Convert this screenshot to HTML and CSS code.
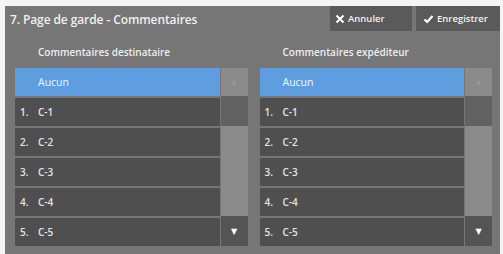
FILE: index.html
```html
<!DOCTYPE html>
<html lang="fr">
<head>
  <meta charset="UTF-8">
  <title>Page de garde - Commentaires</title>
  <link rel="stylesheet" href="styles.css">
</head>
<body>

<div class="panel">
  <header class="top">
    <h1>7. Page de garde - Commentaires</h1>
    <div class="actions">
      <button class="btn">
        <svg width="10" height="10" viewBox="0 0 10 10"><path d="M1.5 1.5 L8.5 8.5 M8.5 1.5 L1.5 8.5" stroke="#fff" stroke-width="2" fill="none"/></svg>
        Annuler
      </button>
      <button class="btn">
        <svg width="11" height="10" viewBox="0 0 11 10"><path d="M1.5 5.5 L4.2 8 L9.5 2" stroke="#fff" stroke-width="2.2" fill="none"/></svg>
        Enregistrer
      </button>
    </div>
  </header>

  <div class="cols">
    <section class="col">
      <h2>Commentaires destinataire</h2>
      <div class="box">
        <ul class="list">
          <li class="sel">Aucun</li>
          <li><span class="num">1.</span>C-1</li>
          <li><span class="num">2.</span>C-2</li>
          <li><span class="num">3.</span>C-3</li>
          <li><span class="num">4.</span>C-4</li>
          <li><span class="num">5.</span>C-5</li>
        </ul>
        <div class="scroll">
          <div class="up">&#9650;</div>
          <div class="thumb"></div>
          <div class="track"></div>
          <div class="down">&#9660;</div>
        </div>
      </div>
    </section>

    <section class="col">
      <h2>Commentaires expéditeur</h2>
      <div class="box">
        <ul class="list">
          <li class="sel">Aucun</li>
          <li><span class="num">1.</span>C-1</li>
          <li><span class="num">2.</span>C-2</li>
          <li><span class="num">3.</span>C-3</li>
          <li><span class="num">4.</span>C-4</li>
          <li><span class="num">5.</span>C-5</li>
        </ul>
        <div class="scroll">
          <div class="up">&#9650;</div>
          <div class="thumb"></div>
          <div class="track"></div>
          <div class="down">&#9660;</div>
        </div>
      </div>
    </section>
  </div>
</div>

</body>
</html>
```

FILE: styles.css
```css
body {
  margin: 0;
  background: #f4f4f4;
  font-family: "Open Sans", "DejaVu Sans", sans-serif;
  color: #eee;
}
.panel {
  margin: 6px 3px 0 5px;
  height: 248px;
  background: #767676;
}
.top {
  display: flex;
  justify-content: space-between;
  height: 25px;
}
h1 {
  margin: 0;
  padding-left: 5px;
  font-size: 12px;
  font-weight: 600;
  line-height: 27px;
  letter-spacing: -0.1px;
  color: #f0f0f0;
}
.actions {
  display: flex;
  gap: 4px;
}
.btn {
  display: flex;
  align-items: center;
  gap: 3px;
  height: 25px;
  padding: 0 0 0 5px;
  border: none;
  background: #5a5a5a;
  color: #f2f2f2;
  font-family: inherit;
  font-size: 9.5px;
  font-weight: 600;
}
.btn:first-child {
  width: 82px;
}
.btn:last-child {
  width: 84px;
  padding-left: 7px;
}
.cols {
  display: flex;
  gap: 12px;
  padding: 0 8px 0 10px;
}
.col {
  flex: 1;
}
h2 {
  margin: 0;
  padding-left: 23px;
  height: 37px;
  line-height: 42px;
  font-size: 10px;
  font-weight: 600;
  color: #eee;
}
.box {
  display: flex;
  gap: 1px;
}
.list {
  flex: 1;
  margin: 0;
  padding: 0;
  list-style: none;
  display: flex;
  flex-direction: column;
  gap: 2px;
}
.list li {
  height: 28px;
  line-height: 28px;
  padding-left: 5px;
  background: #4f4f4f;
  font-size: 10px;
  font-weight: 600;
  color: #e4e4e4;
}
.list li.sel {
  background: #5d9de0;
  padding-left: 23px;
  color: #eef6ff;
  font-weight: 400;
  font-size: 10.5px;
}
.num {
  display: inline-block;
  width: 18px;
}
.scroll {
  width: 27px;
  display: flex;
  flex-direction: column;
}
.up {
  height: 28px;
  background: #8b8b8b;
  color: #9a9a9a;
  font-size: 6px;
  text-align: center;
  line-height: 28px;
}
.thumb {
  height: 30px;
  background: #626262;
}
.track {
  flex: 1;
  background: #8b8b8b;
}
.down {
  height: 30px;
  background: #545454;
  color: #fff;
  font-size: 8px;
  text-align: center;
  line-height: 30px;
}
```
